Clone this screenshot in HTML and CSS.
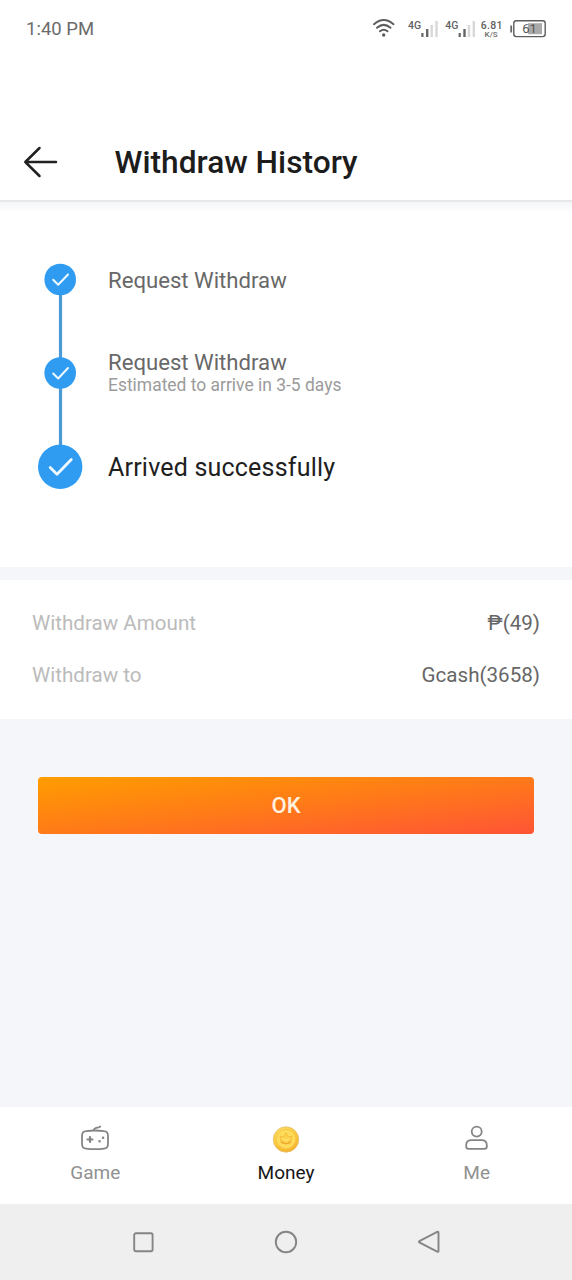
FILE: index.html
```html
<!DOCTYPE html>
<html lang="en">
<head>
<meta charset="utf-8">
<title>Withdraw History</title>
<link rel="stylesheet" href="styles.css">
</head>
<body>
<div class="screen">
  <div class="status">
    <span class="time">1:40 PM</span>
    <svg class="status-icons" width="184" height="30" viewBox="0 0 184 30">
      <g fill="none" stroke="#5d5d5d" stroke-width="2" stroke-linecap="round">
        <path d="M6 11.2Q15.700 2.800 25.500 11.200"/>
        <path d="M9 14.800Q15.700 9 22.500 14.800"/>
        <path d="M12 18.300Q15.700 15.200 19.500 18.300"/>
      </g>
      <circle cx="15.700" cy="22" r="1.700" fill="#5d5d5d"/>
      <g id="signal">
        <text class="net" x="40" y="15.500">4G</text>
        <path d="M53.300 20h2.200v4h-2.200zM58 16h2.400v8H58z" fill="#666"/>
        <path d="M62.500 12h2.400v12h-2.400zM67.300 8h2.400v16h-2.400z" fill="#d8d8d8"/>
      </g>
      <use href="#signal" x="37.300"/>
      <text class="rate" x="112.700" y="15.500">6.81</text>
      <text class="unit" x="116.600" y="24.300">K/S</text>
      <path d="M143.200 12.500v7" stroke="#666" stroke-width="1.800"/>
      <rect x="145.800" y="7.800" width="31.400" height="15.800" rx="2.500" fill="none" stroke="#5d5d5d" stroke-width="1.400"/>
      <rect x="160" y="10.200" width="14" height="11" fill="#aaa"/>
      <text class="charge" x="154.300" y="20.400">61</text>
    </svg>
  </div>

  <header class="header">
    <svg width="36" height="34" viewBox="0 0 36 34" fill="none" stroke="#222" stroke-width="2.500" stroke-linecap="round" stroke-linejoin="round"><path d="M33 17H2.300M16.500 3L2.300 17L16.500 31"/></svg>
    <h1>Withdraw History</h1>
  </header>

  <main class="content">
    <section class="steps">
      <svg class="track" width="46" height="230" viewBox="0 0 46 230">
        <path d="M22.500 17v190" stroke="#4b9ad3" stroke-width="3.200"/>
        <g fill="#2f9cf2"><circle cx="22.200" cy="17.500" r="15.800"/><circle cx="22.200" cy="111" r="15.800"/><circle cx="22.200" cy="204.800" r="22.200"/></g>
        <g fill="none" stroke="#edf9ff" stroke-width="2" stroke-linecap="round" stroke-linejoin="round">
          <path d="M15.200 17.700l5 5L30 12.500"/>
          <path d="M15.200 111.500l5 5L30 106"/>
          <path d="M12.200 205.500l6.800 6.800L33.300 197.500" stroke-width="2.800"/>
        </g>
      </svg>
      <div class="labels">
        <div class="step first">Request Withdraw</div>
        <div class="step second">Request Withdraw<small>Estimated to arrive in 3-5 days</small></div>
        <div class="step done">Arrived successfully</div>
      </div>
    </section>

    <section class="details">
      <div class="row"><span class="key">Withdraw Amount</span><span>₱(49)</span></div>
      <div class="row"><span class="key">Withdraw to</span><span>Gcash(3658)</span></div>
    </section>

    <button class="ok">OK</button>
  </main>

  <nav class="tabs">
    <div class="tab">
      <svg width="32" height="30" viewBox="0 0 32 30" fill="none" stroke="#858585" stroke-width="1.800" stroke-linecap="round" stroke-linejoin="round">
        <path d="M7 7.200Q16 5.800 25 7.200Q29 7.500 29 12V20Q29 24.300 25 24.600Q16 25.700 7 24.600Q3 24.300 3 20V12Q3 7.500 7 7.200Z"/>
        <path d="M14.800 6Q15.500 4 18.500 3.700Q20.500 3.500 21.300 2.500"/>
        <path d="M8.500 15.500h5M11 13v5" stroke-width="2.200"/>
        <path d="M20.500 17.200h.1M24 13.700h.1" stroke-width="2.500"/>
      </svg>
      <span>Game</span>
    </div>
    <div class="tab active">
      <svg width="32" height="30" viewBox="0 0 32 30">
        <defs><radialGradient id="coin" cx=".4" cy=".3" r=".75"><stop offset="0" stop-color="#ffe774"/><stop offset=".6" stop-color="#fbcb3b"/><stop offset="1" stop-color="#f3ae28"/></radialGradient></defs>
        <circle cx="16" cy="15.500" r="12.700" fill="url(#coin)" stroke="#e3bd72" stroke-width=".8"/>
        <circle cx="16" cy="15" r="9.700" fill="#ffdb5c" stroke="#f7c546"/>
        <path d="M10 12l3.500 1L16 9l2.500 4 3.500-1-1.500 7q-4.500 2-9 0z" fill="#fdd04a" stroke="#f3b93a" stroke-width=".8"/>
        <path d="M11 17.500q5 4.500 10 0" fill="none" stroke="#eba630" stroke-width="1.100"/>
        <path d="M12.500 14.500l3.500 2 3.500-2" fill="none" stroke="#fff08b"/>
      </svg>
      <span>Money</span>
    </div>
    <div class="tab">
      <svg width="32" height="30" viewBox="0 0 32 30" fill="none" stroke="#858585" stroke-width="1.800" stroke-linejoin="round">
        <circle cx="15.700" cy="7.600" r="5"/>
        <path d="M5.200 22.500V21Q5.200 16.200 10.500 16.200H20.500Q25.800 16.200 25.800 21V22.500Q25.800 24.800 23.500 24.800H7.500Q5.200 24.800 5.200 22.500Z"/>
      </svg>
      <span>Me</span>
    </div>
  </nav>

  <div class="system">
    <svg width="24" height="26" viewBox="0 0 24 26"><rect x="3.200" y="4.300" width="18.400" height="18" rx="1.700"/></svg>
    <svg width="24" height="26" viewBox="0 0 24 26"><circle cx="12" cy="13" r="10.200"/></svg>
    <svg width="24" height="26" viewBox="0 0 24 26"><path d="M2.300 12.200L20.200 2.900Q21.500 2.300 21.500 3.700V21.900Q21.500 23.300 20.200 22.700L2.300 13.400Q1.300 12.800 2.300 12.200Z"/></svg>
  </div>
</div>
</body>
</html>
```

FILE: styles.css
```css
* { box-sizing: border-box; }
body {
  margin: 0;
  font-family: Roboto, "Noto Sans", sans-serif;
  background: #fff;
}
.screen {
  width: 572px;
  height: 1280px;
  display: flex;
  flex-direction: column;
  overflow: hidden;
}
.status {
  height: 124px;
  padding: 14px 20px 0 26px;
  display: flex;
  justify-content: space-between;
  align-items: flex-start;
}
.time { font-size: 18.5px; line-height: 30px; color: #6b6b6b; }
.status-icons { margin-top: -1px; }
.net { font: 500 10.5px Roboto, sans-serif; fill: #5f5f5f; }
.rate { font: 500 10.5px Roboto, sans-serif; fill: #5f5f5f; letter-spacing: .3px; }
.unit { font: 500 8px Roboto, sans-serif; fill: #6c6c6c; }
.charge { font: 13px Roboto, sans-serif; fill: #555; }
.header {
  height: 76px;
  padding-left: 23px;
  display: flex;
  align-items: center;
  gap: 55.500px;
  flex: none;
}
h1 {
  margin: 1px 0 0;
  font-size: 31.700px;
  line-height: 40px;
  font-weight: 500;
  color: #1c1c1c;
}
.content {
  flex: 1;
  background: #f4f6fa;
}
.steps {
  height: 367px;
  padding: 62px 38px 0;
  display: flex;
  gap: 24px;
  background: linear-gradient(#e8e8ea 0 2px, #f5f6f8 2px, #f8f9fa 6px, #fff 12px);
}
.labels { display: flex; flex-direction: column; }
.step { font-size: 22.150px; line-height: 26px; color: #686868; }
.step small {
  display: block;
  font-size: 17.450px;
  line-height: 20px;
  color: #9b9b9b;
}
.first { margin-top: 5px; }
.second { margin-top: 56px; }
.done { margin-top: 58px; font-size: 25px; line-height: 30px; letter-spacing: .2px; color: #202020; }
.details {
  height: 139px;
  margin-top: 13px;
  padding: 17px 32px 0;
  background: #fff;
}
.row {
  height: 52px;
  display: flex;
  justify-content: space-between;
  font-size: 20.600px;
  line-height: 52px;
  color: #666;
}
.key { color: #bbb; }
.ok {
  display: block;
  width: 496px;
  height: 57px;
  margin: 58px 38px 0;
  padding: 0 0 1px;
  border: 0;
  border-radius: 4px;
  background: linear-gradient(to bottom right, #ff9d00, #ff7a18 50%, #ff5436);
  color: #fff1e0;
  font: 500 22px Roboto, sans-serif;
}
.tabs {
  height: 97px;
  flex: none;
  display: grid;
  grid-template-columns: repeat(3, 1fr);
  background: #fff;
}
.tab {
  display: flex;
  flex-direction: column;
  align-items: center;
  padding-top: 17px;
  font-size: 19px;
  line-height: 24px;
  color: #919191;
}
.tab span { margin-top: 7px; }
.active { color: #161616; }
.system {
  height: 76px;
  flex: none;
  padding: 0 131px;
  display: flex;
  align-items: center;
  justify-content: space-between;
  background: #efefef;
}
.system svg { fill: none; stroke: #858585; stroke-width: 1.900; }
```
